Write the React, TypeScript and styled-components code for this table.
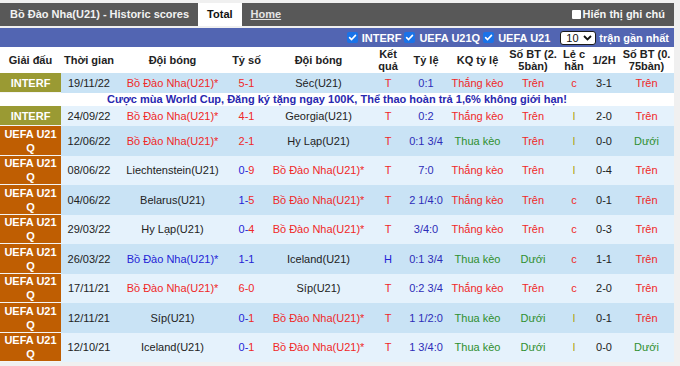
import React from "react";
import styled, { createGlobalStyle } from "styled-components";

const GlobalStyle = createGlobalStyle`
  html, body { margin: 0; padding: 0; background: #f0f0f0; }
  body { font-family: "Liberation Sans", Arial, sans-serif; font-size: 11px; color: #222; }
`;

const Page = styled.div`
  width: 674px;
  padding-top: 3px;
`;

const TitleBar = styled.div`
  display: flex;
  align-items: stretch;
  height: 23px;
  background: #585858;
  color: #fff;
  font-weight: bold;
  font-size: 11px;
  line-height: 23px;
`;

const Title = styled.div`
  padding-left: 10px;
  margin-right: 9px;
  color: #f2f2f2;
`;

const Tab = styled.div<{ $active?: boolean }>`
  padding: 0 9px;
  background: ${(p) => (p.$active ? "#fff" : "transparent")};
  color: ${(p) => (p.$active ? "#111" : "#e4e4e4")};
  text-decoration: ${(p) => (p.$active ? "none" : "underline")};
`;

const Spacer = styled.div`
  flex: 1;
`;

const NoteToggle = styled.label`
  display: flex;
  align-items: center;
  gap: 2px;
  padding-right: 9px;
  color: #f5f5f5;
`;

const WhiteBox = styled.span`
  display: inline-block;
  width: 9px;
  height: 9px;
  background: #fff;
  border-radius: 1px;
`;

const FilterBar = styled.div`
  margin-top: 2px;
  height: 19px;
  background: #5265b2;
  display: flex;
  justify-content: flex-end;
  align-items: center;
  padding-right: 5px;
  color: #fff;
  font-weight: bold;
  font-size: 11px;
`;

const Filter = styled.label`
  display: flex;
  align-items: center;
  gap: 4px;
  margin-right: 3px;
`;

const CheckBox = styled.span`
  display: inline-flex;
  align-items: center;
  justify-content: center;
  width: 11px;
  height: 11px;
  border-radius: 2px;
  background: #1a73e8;
`;

const SelectBox = styled.div`
  display: flex;
  align-items: center;
  justify-content: space-between;
  box-sizing: border-box;
  width: 36px;
  height: 14px;
  margin: 0 3px 0 7px;
  padding: 0 3px 0 5px;
  background: #fff;
  border: 1.5px solid #1b1b1b;
  border-radius: 3px;
  color: #111;
  font-weight: normal;
  font-size: 11px;
`;

const Table = styled.table`
  width: 674px;
  border-collapse: collapse;
  table-layout: fixed;
`;

const HeadRow = styled.tr`
  height: 26px;
  background: #fff;
`;

const HeadCell = styled.th<{ $breakAll?: boolean }>`
  padding: 0 1px;
  font-weight: bold;
  font-size: 11px;
  line-height: 12px;
  color: #222;
  text-align: center;
  vertical-align: middle;
  word-break: ${(p) => (p.$breakAll ? "break-all" : "normal")};
`;

const Row = styled.tr<{ $alt: boolean; $h: number }>`
  height: ${(p) => p.$h}px;
  background: ${(p) => (p.$alt ? "#e5f2fc" : "#c9e3f5")};
`;

const LeagueCell = styled.td<{ $kind: "interf" | "uefa" }>`
  padding: 0 2px;
  box-sizing: border-box;
  background: ${(p) => (p.$kind === "interf" ? "#9a9a33" : "#bf5e02")};
  color: #fff;
  font-weight: bold;
  font-size: 11px;
  line-height: 14px;
  text-align: center;
  vertical-align: middle;
  box-shadow: inset 0 -1px 0 #f4f4f4;
`;

const Cell = styled.td<{ $color?: string }>`
  padding: 0 1px;
  text-align: center;
  vertical-align: middle;
  white-space: nowrap;
  color: ${(p) => p.$color || "#222"};
  font-size: 11px;
`;

const AdRow = styled.tr`
  height: 13px;
  background: #fff;
`;

const AdCell = styled.td`
  padding: 0;
  text-align: center;
  font-weight: bold;
  font-size: 11px;
  line-height: 13px;
  color: #2828b0;
  white-space: nowrap;
`;

const Part = styled.span<{ $color: string }>`
  color: ${(p) => p.$color};
`;

const RED = "#f02828";
const BLUE = "#2424d6";
const NAVY = "#2d2db8";
const GREEN = "#2f8f2f";
const OLIVE = "#ada000";

type Match = {
  league: "interf" | "uefa";
  date: string;
  home: string;
  homeColor: string;
  score: [string, string];
  scoreColors: [string, string];
  away: string;
  awayColor: string;
  result: string;
  odds: string;
  oddsResult: string;
  goals: string;
  parity: string;
  half: string;
  goals2: string;
};

const BDN = "Bồ Đào Nha(U21)*";

const matches: Match[] = [
  { league: "interf", date: "19/11/22", home: BDN, homeColor: RED, score: ["5-", "1"], scoreColors: [RED, RED], away: "Séc(U21)", awayColor: "#222", result: "T", odds: "0:1", oddsResult: "Thắng kèo", goals: "Trên", parity: "c", half: "3-1", goals2: "Trên" },
  { league: "interf", date: "24/09/22", home: BDN, homeColor: RED, score: ["4-", "1"], scoreColors: [RED, RED], away: "Georgia(U21)", awayColor: "#222", result: "T", odds: "0:2", oddsResult: "Thắng kèo", goals: "Trên", parity: "l", half: "2-0", goals2: "Trên" },
  { league: "uefa", date: "12/06/22", home: BDN, homeColor: RED, score: ["2-", "1"], scoreColors: [RED, RED], away: "Hy Lạp(U21)", awayColor: "#222", result: "T", odds: "0:1 3/4", oddsResult: "Thua kèo", goals: "Trên", parity: "l", half: "0-0", goals2: "Dưới" },
  { league: "uefa", date: "08/06/22", home: "Liechtenstein(U21)", homeColor: "#222", score: ["0-", "9"], scoreColors: [BLUE, RED], away: BDN, awayColor: RED, result: "T", odds: "7:0", oddsResult: "Thắng kèo", goals: "Trên", parity: "l", half: "0-4", goals2: "Trên" },
  { league: "uefa", date: "04/06/22", home: "Belarus(U21)", homeColor: "#222", score: ["1-", "5"], scoreColors: [BLUE, RED], away: BDN, awayColor: RED, result: "T", odds: "2 1/4:0", oddsResult: "Thắng kèo", goals: "Trên", parity: "c", half: "0-1", goals2: "Trên" },
  { league: "uefa", date: "29/03/22", home: "Hy Lạp(U21)", homeColor: "#222", score: ["0-", "4"], scoreColors: [BLUE, RED], away: BDN, awayColor: RED, result: "T", odds: "3/4:0", oddsResult: "Thắng kèo", goals: "Trên", parity: "c", half: "0-3", goals2: "Trên" },
  { league: "uefa", date: "26/03/22", home: BDN, homeColor: BLUE, score: ["1-", "1"], scoreColors: [BLUE, BLUE], away: "Iceland(U21)", awayColor: "#222", result: "H", odds: "0:1 3/4", oddsResult: "Thua kèo", goals: "Dưới", parity: "c", half: "1-1", goals2: "Trên" },
  { league: "uefa", date: "17/11/21", home: BDN, homeColor: RED, score: ["6-", "0"], scoreColors: [RED, RED], away: "Síp(U21)", awayColor: "#222", result: "T", odds: "0:2 3/4", oddsResult: "Thắng kèo", goals: "Trên", parity: "c", half: "2-0", goals2: "Trên" },
  { league: "uefa", date: "12/11/21", home: "Síp(U21)", homeColor: "#222", score: ["0-", "1"], scoreColors: [BLUE, RED], away: BDN, awayColor: RED, result: "T", odds: "1 1/2:0", oddsResult: "Thua kèo", goals: "Dưới", parity: "l", half: "0-1", goals2: "Trên" },
  { league: "uefa", date: "12/10/21", home: "Iceland(U21)", homeColor: "#222", score: ["0-", "1"], scoreColors: [BLUE, RED], away: BDN, awayColor: RED, result: "T", odds: "1 3/4:0", oddsResult: "Thua kèo", goals: "Dưới", parity: "l", half: "0-0", goals2: "Dưới" },
];

const colWidths = [61, 56, 111, 37, 107, 32, 44, 59, 52, 30, 30, 55];

const goalColor = (g: string) => (g === "Trên" ? RED : GREEN);

const Check = () => (
  <CheckBox>
    <svg width="9" height="9" viewBox="0 0 10 10">
      <path d="M1.8 5.2 L4 7.3 L8.3 2.6" fill="none" stroke="#fff" strokeWidth="1.8" strokeLinecap="round" strokeLinejoin="round" />
    </svg>
  </CheckBox>
);

const MatchRow = ({ m, alt }: { m: Match; alt: boolean }) => (
  <Row $alt={alt} $h={m.league === "interf" ? 20 : 29.5}>
    <LeagueCell $kind={m.league}>{m.league === "interf" ? "INTERF" : "UEFA U21 Q"}</LeagueCell>
    <Cell>{m.date}</Cell>
    <Cell $color={m.homeColor}>{m.home}</Cell>
    <Cell>
      <Part $color={m.scoreColors[0]}>{m.score[0]}</Part>
      <Part $color={m.scoreColors[1]}>{m.score[1]}</Part>
    </Cell>
    <Cell $color={m.awayColor}>{m.away}</Cell>
    <Cell $color={m.result === "T" ? RED : BLUE}>{m.result}</Cell>
    <Cell $color={NAVY}>{m.odds}</Cell>
    <Cell $color={m.oddsResult === "Thắng kèo" ? RED : GREEN}>{m.oddsResult}</Cell>
    <Cell $color={goalColor(m.goals)}>{m.goals}</Cell>
    <Cell $color={m.parity === "c" ? RED : OLIVE}>{m.parity}</Cell>
    <Cell>{m.half}</Cell>
    <Cell $color={goalColor(m.goals2)}>{m.goals2}</Cell>
  </Row>
);

export default function App() {
  return (
    <>
      <GlobalStyle />
      <Page>
        <TitleBar>
          <Title>Bồ Đào Nha(U21) - Historic scores</Title>
          <Tab $active>Total</Tab>
          <Tab>Home</Tab>
          <Spacer />
          <NoteToggle>
            <WhiteBox />
            Hiển thị ghi chú
          </NoteToggle>
        </TitleBar>
        <FilterBar>
          <Filter>
            <Check />
            INTERF
          </Filter>
          <Filter>
            <Check />
            UEFA U21Q
          </Filter>
          <Filter>
            <Check />
            UEFA U21
          </Filter>
          <SelectBox>
            <span>10</span>
            <svg width="9" height="6" viewBox="0 0 9 6">
              <path d="M1 1 L4.5 4.5 L8 1" fill="none" stroke="#111" strokeWidth="1.8" />
            </svg>
          </SelectBox>
          <span>trận gần nhất</span>
        </FilterBar>
        <Table>
          <colgroup>
            {colWidths.map((w, i) => (
              <col key={i} style={{ width: w }} />
            ))}
          </colgroup>
          <thead>
            <HeadRow>
              <HeadCell>Giải đấu</HeadCell>
              <HeadCell>Thời gian</HeadCell>
              <HeadCell>Đội bóng</HeadCell>
              <HeadCell>Tỷ số</HeadCell>
              <HeadCell>Đội bóng</HeadCell>
              <HeadCell>Kết quả</HeadCell>
              <HeadCell>Tỷ lệ</HeadCell>
              <HeadCell>KQ tỷ lệ</HeadCell>
              <HeadCell $breakAll>Số BT (2.5bàn)</HeadCell>
              <HeadCell $breakAll>Lẻ chẵn</HeadCell>
              <HeadCell>1/2H</HeadCell>
              <HeadCell $breakAll>Số BT (0.75bàn)</HeadCell>
            </HeadRow>
          </thead>
          <tbody>
            <MatchRow m={matches[0]} alt={false} />
            <AdRow>
              <AdCell colSpan={12}>
                Cược mùa World Cup, Đăng ký tặng ngay 100K, Thể thao hoàn trả 1,6% không giới hạn!
              </AdCell>
            </AdRow>
            {matches.slice(1).map((m, i) => (
              <MatchRow key={m.date} m={m} alt={i % 2 === 0} />
            ))}
          </tbody>
        </Table>
      </Page>
    </>
  );
}
